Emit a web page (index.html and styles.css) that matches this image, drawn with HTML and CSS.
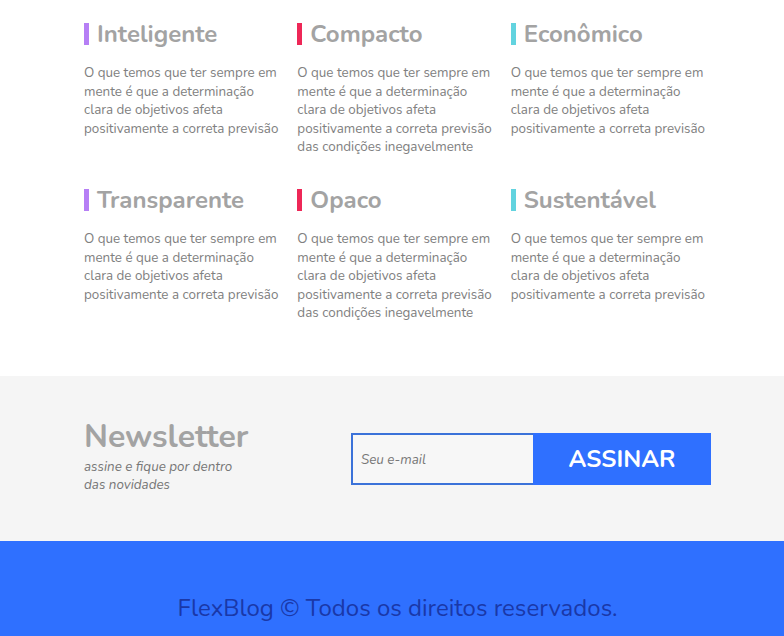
FILE: index.html
```html
<!DOCTYPE html>
<html lang="pt-BR">
<head>
<meta charset="utf-8">
<title>FlexBlog</title>
<link rel="stylesheet" href="styles.css">
</head>
<body>
<section class="features">
  <div class="container grid">
    <div class="item">
      <h2 class="title purple">Inteligente</h2>
      <p>O que temos que ter sempre em mente é que a determinação clara de objetivos afeta positivamente a correta previsão</p>
    </div>
    <div class="item">
      <h2 class="title red">Compacto</h2>
      <p>O que temos que ter sempre em mente é que a determinação clara de objetivos afeta positivamente a correta previsão das condições inegavelmente</p>
    </div>
    <div class="item">
      <h2 class="title cyan">Econômico</h2>
      <p>O que temos que ter sempre em mente é que a determinação clara de objetivos afeta positivamente a correta previsão</p>
    </div>
    <div class="item">
      <h2 class="title purple">Transparente</h2>
      <p>O que temos que ter sempre em mente é que a determinação clara de objetivos afeta positivamente a correta previsão</p>
    </div>
    <div class="item">
      <h2 class="title red">Opaco</h2>
      <p>O que temos que ter sempre em mente é que a determinação clara de objetivos afeta positivamente a correta previsão das condições inegavelmente</p>
    </div>
    <div class="item">
      <h2 class="title cyan">Sustentável</h2>
      <p>O que temos que ter sempre em mente é que a determinação clara de objetivos afeta positivamente a correta previsão</p>
    </div>
  </div>
</section>
<section class="newsletter">
  <div class="container nl-row">
    <div class="nl-info">
      <h2>Newsletter</h2>
      <p>assine e fique por dentro das novidades</p>
    </div>
    <form class="nl-form">
      <input type="email" placeholder="Seu e-mail">
      <button type="button">ASSINAR</button>
    </form>
  </div>
</section>
<footer class="footer">
  <p>FlexBlog © Todos os direitos reservados.</p>
</footer>
</body>
</html>
```
FILE: styles.css
```css
* { box-sizing: border-box; }
body {
  margin: 0;
  font-family: "Nunito", "Open Sans", "Noto Sans", sans-serif;
  background: #fff;
}
.container {
  width: 640px;
  margin: 0 auto;
}
.features {
  padding: 18px 0 53px;
}
.grid {
  display: grid;
  grid-template-columns: repeat(3, 1fr);
  row-gap: 27px;
}
.item {
  padding: 0 4px 0 12px;
}
.title {
  margin: 0;
  font-size: 24px;
  font-weight: 700;
  color: #a3a3a3;
  line-height: 32px;
  border-left: 5px solid;
  padding-left: 8px;
  height: 22px;
  display: flex;
  align-items: center;
  margin-top: 5px;
}
.purple { border-color: #b67ff5; }
.red { border-color: #ee2757; }
.cyan { border-color: #62d3df; }
.item p {
  margin: 19px 0 0;
  font-size: 13.4px;
  line-height: 18.6px;
  color: #808080;
}
.newsletter {
  background: #f5f5f5;
  height: 165px;
  display: flex;
  align-items: center;
}
.nl-row {
  display: flex;
  align-items: center;
  justify-content: space-between;
  padding-left: 12px;
  padding-right: 1px;
}
.nl-info {
  margin-bottom: 4px;
}
.nl-info h2 {
  margin: 0 0 3px;
  font-size: 32px;
  line-height: 36px;
  color: #a3a3a3;
  font-weight: 700;
}
.nl-info p {
  margin: 0;
  width: 165px;
  font-size: 13.4px;
  line-height: 18px;
  font-style: italic;
  color: #777;
}
.nl-form {
  display: flex;
  margin: 0;
  margin-top: 2px;
}
.nl-form input {
  width: 182px;
  height: 52px;
  border: 2px solid #3b72d9;
  border-right: none;
  background: #f7f7f7;
  padding: 0 8px;
  font-family: inherit;
  font-style: italic;
  font-size: 13.4px;
  color: #666;
  outline: none;
}
.nl-form input::placeholder { color: #777; }
.nl-form button {
  width: 178px;
  height: 52px;
  border: none;
  background: #2f70ff;
  color: #fff;
  font-family: inherit;
  font-weight: 700;
  font-size: 24px;
  cursor: pointer;
}
.footer {
  background: #2f70ff;
  height: 110px;
  display: flex;
  justify-content: center;
  padding: 50px 0 0 11px;
}
.footer p {
  margin: 0;
  font-size: 24px;
  line-height: 34px;
  color: #1a38a8;
}
```
